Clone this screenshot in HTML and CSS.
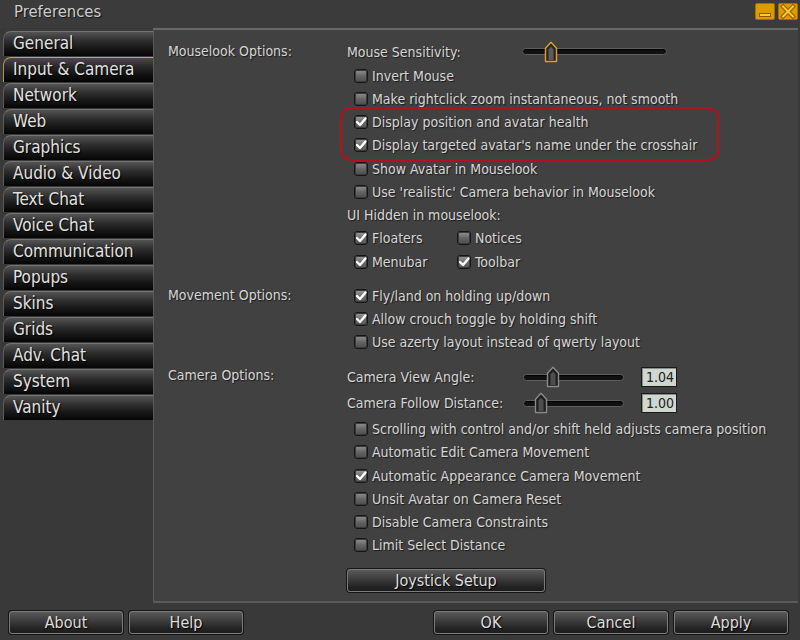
FILE: index.html
```html
<!DOCTYPE html>
<html>
<head>
<meta charset="utf-8">
<link rel="stylesheet" href="styles.css">
</head>
<body>
<div class="window">
  <div class="titlebar">
    <span class="title">Preferences</span>
    <div class="wbtns">
      <svg class="wbtn" width="20" height="17" viewBox="0 0 20 17">
        <rect x="0.5" y="0.5" width="19" height="16" rx="1.5" fill="#dc9c00" stroke="#a86e00"/>
        <rect x="4.5" y="10.5" width="11" height="3" fill="#ffc835" stroke="#8a5a00"/>
      </svg>
      <svg class="wbtn" width="20" height="17" viewBox="0 0 20 17">
        <rect x="0.5" y="0.5" width="19" height="16" rx="1.5" fill="#dc9c00" stroke="#a86e00"/>
        <path d="M5 3.5 L15 13.5 M15 3.5 L5 13.5" stroke="#8a5a00" stroke-width="4" stroke-linecap="square"/>
        <path d="M5 3.5 L15 13.5 M15 3.5 L5 13.5" stroke="#ffc835" stroke-width="2" stroke-linecap="square"/>
      </svg>
    </div>
  </div>

  <div class="main">
    <nav class="tabs">
      <div class="tab">General</div>
      <div class="tab active">Input &amp; Camera</div>
      <div class="tab">Network</div>
      <div class="tab">Web</div>
      <div class="tab">Graphics</div>
      <div class="tab">Audio &amp; Video</div>
      <div class="tab">Text Chat</div>
      <div class="tab">Voice Chat</div>
      <div class="tab">Communication</div>
      <div class="tab">Popups</div>
      <div class="tab">Skins</div>
      <div class="tab">Grids</div>
      <div class="tab">Adv. Chat</div>
      <div class="tab">System</div>
      <div class="tab">Vanity</div>
    </nav>

    <section class="panel">
      <div class="group">
        <div class="glabel">Mouselook Options:</div>
        <div class="gbody">
          <div class="row slider-row">
            <span class="slabel">Mouse Sensitivity:</span>
            <div class="slider s-wide">
              <div class="track"></div>
              <svg class="thumb" style="left:22px" width="14" height="22" viewBox="0 0 14 22">
                <path d="M1.5 20.5 V7.2 L7 1.2 L12.5 7.2 V20.5 Z" fill="#262626" stroke="#e0a020" stroke-width="1.4" stroke-linejoin="round"/>
                <path d="M4.5 19 V8.5 L7 5.5 L9.5 8.5 V19 Z" fill="#5c5c5c"/>
              </svg>
            </div>
          </div>
          <div class="row check"><span class="cb"></span>Invert Mouse</div>
          <div class="row check"><span class="cb"></span>Make rightclick zoom instantaneous, not smooth</div>
          <div class="highlight">
            <div class="row check"><span class="cb on"><svg width="14" height="14" viewBox="0 0 14 14"><path d="M3 7 L6 10 L11.5 3.5" fill="none" stroke="#fff" stroke-width="2.4" stroke-linecap="round" stroke-linejoin="round"/></svg></span>Display position and avatar health</div>
            <div class="row check"><span class="cb on"><svg width="14" height="14" viewBox="0 0 14 14"><path d="M3 7 L6 10 L11.5 3.5" fill="none" stroke="#fff" stroke-width="2.4" stroke-linecap="round" stroke-linejoin="round"/></svg></span>Display targeted avatar's name under the crosshair</div>
          </div>
          <div class="row check"><span class="cb"></span>Show Avatar in Mouselook</div>
          <div class="row check"><span class="cb"></span>Use 'realistic' Camera behavior in Mouselook</div>
          <div class="row">UI Hidden in mouselook:</div>
          <div class="row pair">
            <div class="check"><span class="cb on"><svg width="14" height="14" viewBox="0 0 14 14"><path d="M3 7 L6 10 L11.5 3.5" fill="none" stroke="#fff" stroke-width="2.4" stroke-linecap="round" stroke-linejoin="round"/></svg></span>Floaters</div>
            <div class="check"><span class="cb"></span>Notices</div>
          </div>
          <div class="row pair">
            <div class="check"><span class="cb on"><svg width="14" height="14" viewBox="0 0 14 14"><path d="M3 7 L6 10 L11.5 3.5" fill="none" stroke="#fff" stroke-width="2.4" stroke-linecap="round" stroke-linejoin="round"/></svg></span>Menubar</div>
            <div class="check"><span class="cb on"><svg width="14" height="14" viewBox="0 0 14 14"><path d="M3 7 L6 10 L11.5 3.5" fill="none" stroke="#fff" stroke-width="2.4" stroke-linecap="round" stroke-linejoin="round"/></svg></span>Toolbar</div>
          </div>
        </div>
      </div>

      <div class="group movement">
        <div class="glabel">Movement Options:</div>
        <div class="gbody">
          <div class="row check"><span class="cb on"><svg width="14" height="14" viewBox="0 0 14 14"><path d="M3 7 L6 10 L11.5 3.5" fill="none" stroke="#fff" stroke-width="2.4" stroke-linecap="round" stroke-linejoin="round"/></svg></span>Fly/land on holding up/down</div>
          <div class="row check"><span class="cb on"><svg width="14" height="14" viewBox="0 0 14 14"><path d="M3 7 L6 10 L11.5 3.5" fill="none" stroke="#fff" stroke-width="2.4" stroke-linecap="round" stroke-linejoin="round"/></svg></span>Allow crouch toggle by holding shift</div>
          <div class="row check"><span class="cb"></span>Use azerty layout instead of qwerty layout</div>
        </div>
      </div>

      <div class="group camera">
        <div class="glabel cam-label">Camera Options:</div>
        <div class="gbody">
          <div class="row slider-row cam">
            <span class="slabel">Camera View Angle:</span>
            <div class="slider s-short">
              <div class="track"></div>
              <svg class="thumb" style="left:23px" width="14" height="22" viewBox="0 0 14 22">
                <path d="M1.5 20.5 V7.2 L7 1.2 L12.5 7.2 V20.5 Z" fill="#1e1e1e" stroke="#8a8a8a" stroke-width="1.4" stroke-linejoin="round"/>
                <path d="M4.5 19 V8.5 L7 5.5 L9.5 8.5 V19 Z" fill="#4e4e4e"/>
              </svg>
            </div>
            <span class="field">1.04</span>
          </div>
          <div class="row slider-row cam">
            <span class="slabel">Camera Follow Distance:</span>
            <div class="slider s-short">
              <div class="track"></div>
              <svg class="thumb" style="left:11px" width="14" height="22" viewBox="0 0 14 22">
                <path d="M1.5 20.5 V7.2 L7 1.2 L12.5 7.2 V20.5 Z" fill="#1e1e1e" stroke="#8a8a8a" stroke-width="1.4" stroke-linejoin="round"/>
                <path d="M4.5 19 V8.5 L7 5.5 L9.5 8.5 V19 Z" fill="#4e4e4e"/>
              </svg>
            </div>
            <span class="field">1.00</span>
          </div>
          <div class="row check first-after"><span class="cb"></span>Scrolling with control and/or shift held adjusts camera position</div>
          <div class="row check"><span class="cb"></span>Automatic Edit Camera Movement</div>
          <div class="row check"><span class="cb on"><svg width="14" height="14" viewBox="0 0 14 14"><path d="M3 7 L6 10 L11.5 3.5" fill="none" stroke="#fff" stroke-width="2.4" stroke-linecap="round" stroke-linejoin="round"/></svg></span>Automatic Appearance Camera Movement</div>
          <div class="row check"><span class="cb"></span>Unsit Avatar on Camera Reset</div>
          <div class="row check"><span class="cb"></span>Disable Camera Constraints</div>
          <div class="row check"><span class="cb"></span>Limit Select Distance</div>
          <div class="btn joystick">Joystick Setup</div>
        </div>
      </div>
    </section>
  </div>

  <div class="footer">
    <div class="btn-group">
      <div class="btn">About</div>
      <div class="btn">Help</div>
    </div>
    <div class="btn-group">
      <div class="btn">OK</div>
      <div class="btn">Cancel</div>
      <div class="btn">Apply</div>
    </div>
  </div>
</div>
</body>
</html>
```

FILE: styles.css
```css
* { box-sizing: border-box; }
html, body { margin: 0; padding: 0; }
body {
  width: 800px;
  height: 640px;
  overflow: hidden;
  background: #383838;
  font-family: "DejaVu Sans Condensed", "DejaVu Sans", sans-serif;
  font-stretch: condensed;
  color: #d6d6d6;
}

.window {
  width: 800px;
  height: 640px;
  display: flex;
  flex-direction: column;
  background: #393939;
}

/* title bar */
.titlebar {
  height: 28px;
  display: flex;
  justify-content: space-between;
  align-items: flex-start;
  padding: 0 2px 0 14px;
  background: #3b3b3b;
}
.title {
  font-size: 16.5px;
  line-height: 23px;
  color: #cdcdcd;
  text-shadow: 1px 1px 1px #111;
}
.wbtns {
  display: flex;
  gap: 3px;
  padding-top: 3px;
}
.wbtn { display: block; }

/* main area */
.main {
  height: 575px;
  display: flex;
}

.tabs {
  width: 153px;
  padding: 3px 0 0 3px;
  display: flex;
  flex-direction: column;
}
.tab {
  height: 25px;
  margin-bottom: 1px;
  padding-left: 9px;
  border-radius: 8px 0 0 0;
  border-top: 1px solid #747474;
  border-left: 1px solid #5c5c5c;
  background: linear-gradient(#545454, #303030 35%, #161616 70%, #050505);
  font-size: 17px;
  line-height: 23px;
  color: #e2e2e2;
  text-shadow: 1px 1px 1px #000;
  white-space: nowrap;
}
.tab.active {
  border-top-color: #c8a262;
  border-left-color: #b08e55;
  background: linear-gradient(#4a4a4a, #2a2a2a 35%, #111 70%, #030303);
}

.panel {
  flex: 1;
  margin-right: 2px;
  background: #414141;
  border-top: 2px solid #686868;
  border-left: 1px solid #5a5a5a;
  border-bottom: 2px solid #5a5a5a;
  padding: 9px 0 0 14px;
  font-size: 14px;
  text-shadow: 1px 1px 1px #1c1c1c;
}

.group {
  display: grid;
  grid-template-columns: 179px 1fr;
}
.glabel {
  height: 23.25px;
  line-height: 23.25px;
  white-space: nowrap;
}
.group:first-child .glabel {
  height: 25px;
  line-height: 25px;
}
.movement { margin-top: 11px; }
.camera { margin-top: 10px; }
.cam-label {
  height: 26px;
  line-height: 22px;
}

.gbody {
  display: flex;
  flex-direction: column;
}
.row {
  height: 23.25px;
  display: flex;
  align-items: center;
  white-space: nowrap;
}
.check {
  display: flex;
  align-items: center;
  padding-left: 7px;
}
.pair { padding-left: 0; }
.pair .check { width: 103px; }

.cb {
  width: 14px;
  height: 14px;
  margin-right: 4px;
  flex: none;
  border: 1px solid #161616;
  border-radius: 3px;
  background: linear-gradient(#909090, #626262 55%, #4c4c4c);
  box-shadow: inset 0 0 0 1px #3a3a3a;
  display: flex;
}
.cb.on {
  background: linear-gradient(#9a9a9a, #6a6a6a 55%, #555);
}
.cb svg { display: block; margin: -1px; }

.highlight { position: relative; }
.highlight::after {
  content: "";
  position: absolute;
  left: -7px;
  top: -3.5px;
  width: 375px;
  bottom: -4px;
  border: 2px solid #b0121e;
  border-radius: 11px;
  pointer-events: none;
}

/* sliders */
.slider-row { height: 25px; }
.slider-row.cam { height: 26px; }
.slabel { width: 175px; flex: none; }
.cam .slabel { width: 176px; }
.slider {
  position: relative;
  height: 22px;
  flex: none;
  display: flex;
  align-items: center;
}
.s-wide { width: 145px; }
.s-short { width: 101px; }
.track {
  width: 100%;
  height: 7px;
  border-radius: 4px;
  background: #111;
  border: 1px solid #5e5e5e;
  box-shadow: inset 0 1px 1px #000;
}
.thumb {
  position: absolute;
  top: 0;
  display: block;
}
.field {
  margin-left: 17px;
  width: 36px;
  height: 20px;
  background: #d0d6d0;
  border: 1px solid #1a1a1a;
  box-shadow: inset 1px 1px 0 #8a8e8a;
  color: #202020;
  text-shadow: none;
  padding-left: 4px;
  line-height: 18px;
  font-size: 14px;
}
.first-after { margin-top: 1.4px; }

/* buttons */
.btn {
  height: 23px;
  border: 1px solid #7c7c7c;
  border-radius: 3px;
  background: linear-gradient(#5a5a5a, #3a3a3a 45%, #232323 80%, #1c1c1c);
  box-shadow: 0 0 0 1px #151515;
  color: #dedede;
  font-size: 16px;
  line-height: 21px;
  text-align: center;
  text-shadow: 1px 1px 1px #000;
}
.joystick {
  width: 198px;
  margin-top: 12px;
}

.footer {
  height: 37px;
  display: flex;
  justify-content: space-between;
  padding: 8px 12px 0 9px;
}
.btn-group {
  display: flex;
  gap: 6px;
}
.btn-group .btn { width: 114px; }
```
